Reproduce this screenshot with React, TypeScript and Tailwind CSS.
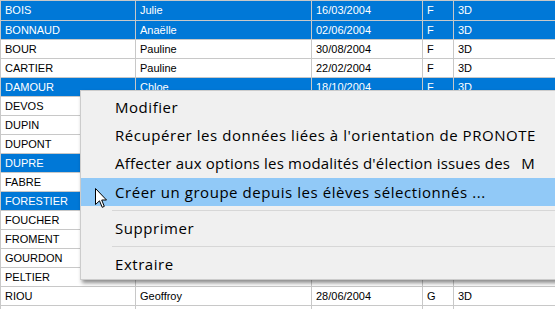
import React from 'react';

// Lignes de la liste des élèves (les cellules cachées par le menu restent vides)
const rows = [
  { nom: 'BOIS', prenom: 'Julie', date: '16/03/2004', sexe: 'F', classe: '3D', sel: true },
  { nom: 'BONNAUD', prenom: 'Anaëlle', date: '02/06/2004', sexe: 'F', classe: '3D', sel: true },
  { nom: 'BOUR', prenom: 'Pauline', date: '30/08/2004', sexe: 'F', classe: '3D', sel: false },
  { nom: 'CARTIER', prenom: 'Pauline', date: '22/02/2004', sexe: 'F', classe: '3D', sel: false },
  { nom: 'DAMOUR', prenom: 'Chloe', date: '18/10/2004', sexe: 'F', classe: '3D', sel: true },
  { nom: 'DEVOS', prenom: '', date: '', sexe: '', classe: '', sel: false },
  { nom: 'DUPIN', prenom: '', date: '', sexe: '', classe: '', sel: false },
  { nom: 'DUPONT', prenom: '', date: '', sexe: '', classe: '', sel: false },
  { nom: 'DUPRE', prenom: '', date: '', sexe: '', classe: '', sel: true },
  { nom: 'FABRE', prenom: '', date: '', sexe: '', classe: '', sel: false },
  { nom: 'FORESTIER', prenom: '', date: '', sexe: '', classe: '', sel: true },
  { nom: 'FOUCHER', prenom: '', date: '', sexe: '', classe: '', sel: false },
  { nom: 'FROMENT', prenom: '', date: '', sexe: '', classe: '', sel: false },
  { nom: 'GOURDON', prenom: '', date: '', sexe: '', classe: '', sel: false },
  { nom: 'PELTIER', prenom: '', date: '', sexe: '', classe: '', sel: false },
  { nom: 'RIOU', prenom: 'Geoffroy', date: '28/06/2004', sexe: 'G', classe: '3D', sel: false },
  { nom: '', prenom: '', date: '', sexe: '', classe: '', sel: false },
];

const cell = 'h-full flex items-center pl-[4px] border-r border-[#c8c8c8] whitespace-nowrap overflow-hidden';

const Separator = () => (
  <div className="h-[8px] flex items-center pl-[31px]">
    <div className="h-px w-full bg-[#d7d7d7]" />
  </div>
);

const App = () => {
  return (
    <div className="relative w-[555px] h-[309px] overflow-hidden bg-white">
      {/* Liste */}
      <div className="border-t border-l border-[#c8c8c8] text-[11px] font-['Liberation_Sans',Arial,sans-serif]">
        {rows.map((r, i) => (
          <div
            key={i}
            className={`flex border-b border-[#c8c8c8] ${i === 0 ? 'h-[20px]' : 'h-[19px]'} ${
              r.sel ? 'bg-[#0078d7] text-white' : 'bg-white text-black'
            }`}
          >
            <div className={`${cell} w-[135px]`}>{r.nom}</div>
            <div className={`${cell} w-[176px]`}>{r.prenom}</div>
            <div className={`${cell} w-[111px]`}>{r.date}</div>
            <div className={`${cell} w-[31px]`}>{r.sexe}</div>
            <div className={`${cell} flex-1 border-r-0`}>{r.classe}</div>
          </div>
        ))}
      </div>

      {/* Menu contextuel */}
      <div className="absolute left-[80px] top-[90px] w-[520px] bg-[#f0f0f0] border border-[#cccccc] shadow-[2px_3px_4px_rgba(0,0,0,0.45)] pt-[2px] pb-px text-[15px] tracking-[0.55px] text-black font-['Open_Sans','Noto_Sans',sans-serif] whitespace-pre">
        <div className="h-[28px] flex items-center pl-[34px]">Modifier</div>
        <div className="h-[28px] flex items-center pl-[34px]">Récupérer les données liées à l'orientation de PRONOTE</div>
        <div className="h-[28px] flex items-center pl-[34px] tracking-[0.2px]">
          Affecter aux options les modalités d'élection issues des  <span className="ml-[3px]">M</span>
        </div>
        <div className="h-[28px] mt-px flex items-center pl-[34px] bg-[#91c9f7]">Créer un groupe depuis les élèves sélectionnés ...</div>
        <Separator />
        <div className="h-[28px] flex items-center pl-[34px]">Supprimer</div>
        <Separator />
        <div className="h-[28px] flex items-center pl-[34px]">Extraire</div>
      </div>

      {/* Curseur */}
      <svg className="absolute left-[95px] top-[188px]" width="13" height="21" viewBox="0 0 13 21">
        <path
          d="M0.5 0.5 V16.5 L4.5 12.8 L7.2 19.3 L9.3 18.4 L6.7 12 H11.5 Z"
          fill="white"
          stroke="black"
          strokeWidth="1"
          strokeLinejoin="miter"
        />
      </svg>
    </div>
  );
};

export default App;
